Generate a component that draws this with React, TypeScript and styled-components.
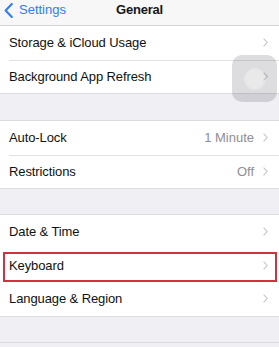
import React from 'react';
import styled, { createGlobalStyle } from 'styled-components';

const GlobalStyle = createGlobalStyle`
  html, body {
    margin: 0;
    padding: 0;
    background: #efeff4;
  }
  body {
    font-family: "Liberation Sans", Arial, sans-serif;
    -webkit-font-smoothing: antialiased;
  }
`;

const Screen = styled.div`
  position: relative;
  width: 279px;
  height: 347px;
  overflow: hidden;
  background: #efeff4;
`;

const NavBar = styled.header`
  height: 26px;
  box-sizing: border-box;
  background: #f7f7f8;
  border-bottom: 1px solid #d3d3d6;
  display: grid;
  grid-template-columns: 1fr auto 1fr;
  align-items: start;
  padding-top: 2px;
`;

const BackButton = styled.div`
  display: flex;
  align-items: center;
  gap: 6px;
  padding-left: 4px;
  color: #2f7cf6;
  font-size: 13px;
  line-height: 16px;
`;

const NavTitle = styled.h1`
  margin: 0;
  font-size: 13px;
  font-weight: 700;
  line-height: 16px;
  color: #161616;
  letter-spacing: -0.2px;
`;

const Group = styled.section`
  background: #fff;
  border-bottom: 1px solid #dcdce0;
`;

const Spacer = styled.div<{ $h: number }>`
  height: ${(p) => p.$h}px;
  border-bottom: 1px solid #dcdce0;
  box-sizing: border-box;
`;

const Row = styled.div<{ $highlight?: boolean }>`
  position: relative;
  height: 33.5px;
  display: flex;
  align-items: center;
  padding: 0 11px 0 9px;
  box-sizing: border-box;

  & + &::before {
    content: '';
    position: absolute;
    left: 9px;
    right: 0;
    top: 0;
    border-top: 1px solid #e2e2e6;
  }

  ${(p) =>
    p.$highlight &&
    `
    &::after {
      content: '';
      position: absolute;
      left: 3px;
      right: 2px;
      top: 3px;
      bottom: 0;
      border: 2px solid #d2323f;
    }
  `}
`;

const Label = styled.span`
  flex: 1;
  font-size: 13px;
  color: #111;
  letter-spacing: -0.1px;
`;

const Value = styled.span`
  font-size: 13px;
  color: #8e8e93;
  margin-right: 9px;
`;

const Touch = styled.div`
  position: absolute;
  left: 232px;
  top: 55px;
  width: 45px;
  height: 47px;
  border-radius: 10px;
  background: rgba(30, 30, 40, 0.15);
  display: flex;
  align-items: center;
  justify-content: center;
`;

const TouchDot = styled.div`
  width: 22px;
  height: 22px;
  border-radius: 50%;
  background: radial-gradient(circle, rgba(255, 255, 255, 0.35) 55%, rgba(255, 255, 255, 0.12) 78%, rgba(255, 255, 255, 0) 100%);
`;

const Chevron = () => (
  <svg width="5" height="9" viewBox="0 0 5 9" fill="none">
    <path d="M0.6 0.6 L4.2 4.5 L0.6 8.4" stroke="#c4c4c9" strokeWidth="1.1" />
  </svg>
);

const BackChevron = () => (
  <svg width="9" height="15" viewBox="0 0 9 15" fill="none">
    <path d="M7.8 1 L1.6 7.5 L7.8 14" stroke="#2f7cf6" strokeWidth="2" strokeLinecap="round" strokeLinejoin="round" />
  </svg>
);

type Item = { label: string; value?: string; highlight?: boolean };

const groups: Item[][] = [
  [{ label: 'Storage & iCloud Usage' }, { label: 'Background App Refresh' }],
  [
    { label: 'Auto-Lock', value: '1 Minute' },
    { label: 'Restrictions', value: 'Off' },
  ],
  [{ label: 'Date & Time' }, { label: 'Keyboard', highlight: true }, { label: 'Language & Region' }],
];

export default function App() {
  return (
    <Screen>
      <GlobalStyle />
      <NavBar>
        <BackButton>
          <BackChevron />
          Settings
        </BackButton>
        <NavTitle>General</NavTitle>
        <div />
      </NavBar>
      {groups.map((items, gi) => (
        <React.Fragment key={gi}>
          {gi > 0 && <Spacer $h={gi === 1 ? 27 : 26} />}
          <Group>
            {items.map((it) => (
              <Row key={it.label} $highlight={it.highlight}>
                <Label>{it.label}</Label>
                {it.value && <Value>{it.value}</Value>}
                <Chevron />
              </Row>
            ))}
          </Group>
        </React.Fragment>
      ))}
      <Spacer $h={26} />
      <Touch>
        <TouchDot />
      </Touch>
    </Screen>
  );
}
